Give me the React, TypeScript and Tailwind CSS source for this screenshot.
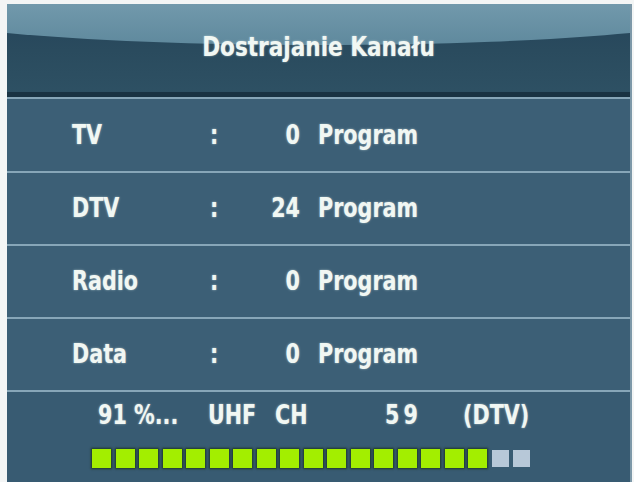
import React from "react";

const rows = [
  { label: "TV", count: 0 },
  { label: "DTV", count: 24 },
  { label: "Radio", count: 0 },
  { label: "Data", count: 0 },
];

const FILLED = 17;
const TOTAL = 19;

function Row({ label, count, first }: { label: string; count: number; first?: boolean }) {
  return (
    <div
      className={
        "flex items-center border-t-2 border-[#87a6b8] bg-[#3c5f76] " +
        (first ? "h-[74px]" : "h-[73px]")
      }
    >
      <div className="flex items-center pl-[65px] scale-y-[1.18] origin-center">
        <span className="w-[138px]">{label}</span>
        <span className="w-[10px]">:</span>
        <span className="w-[80px] text-right">{count}</span>
        <span className="ml-[18px]">Program</span>
      </div>
    </div>
  );
}

export default function App() {
  return (
    <div className="w-[634px] h-[482px] bg-[#f3f5f5] pl-[7px] pt-[4px] pr-[2px] overflow-hidden">
      <div className="h-full flex flex-col bg-[#3b5e75] border-r-2 border-[#7d98a8] text-[#f1f7f3] font-bold font-['DejaVu_Sans_Condensed','DejaVu_Sans',sans-serif] text-[23px] leading-none [text-shadow:0_0_2px_rgba(235,250,245,0.6)]">
        {/* header with curved light band */}
        <div className="relative h-[93px] overflow-hidden bg-gradient-to-b from-[#24435a] via-[#2a4b5e] to-[#2e5164]">
          <div className="absolute left-[-138px] top-[-45px] w-[900px] h-[86px] rounded-[50%] bg-gradient-to-b from-[#86abbc] to-[#5f899d]" />
          <div className="absolute left-0 right-0 bottom-0 h-[5px] bg-[#1a3343]" />
          <div className="relative h-[88px] flex items-center justify-center pb-[2px]">
            <span className="text-[24px] scale-y-[1.08]">Dostrajanie Kanału</span>
          </div>
        </div>

        {rows.map((r, i) => (
          <Row key={r.label} label={r.label} count={r.count} first={i === 0} />
        ))}

        {/* status bar */}
        <div className="flex-1 flex flex-col border-t-2 border-[#87a6b8] bg-[#385b72]">
          <div className="flex items-center pl-[91px] pt-[10px] h-[35px] scale-y-[1.18] origin-center">
            <span className="w-[110px]">91 %...</span>
            <span className="w-[67px]">UHF</span>
            <span className="w-[110px]">CH</span>
            <span className="w-[78px] tracking-[4px]">59</span>
            <span>(DTV)</span>
          </div>
          <div className="flex items-center gap-[4.5px] pl-[85px] mt-[22px]">
            {Array.from({ length: TOTAL }).map((_, i) =>
              i < FILLED ? (
                <div
                  key={i}
                  className="w-[19px] h-[19px] bg-[#a3ee00] shadow-[0_0_2px_1px_rgba(20,40,10,0.7)]"
                />
              ) : (
                <div key={i} className="w-[17px] h-[17px] bg-[#b7c8d8]" />
              )
            )}
          </div>
        </div>
      </div>
    </div>
  );
}
